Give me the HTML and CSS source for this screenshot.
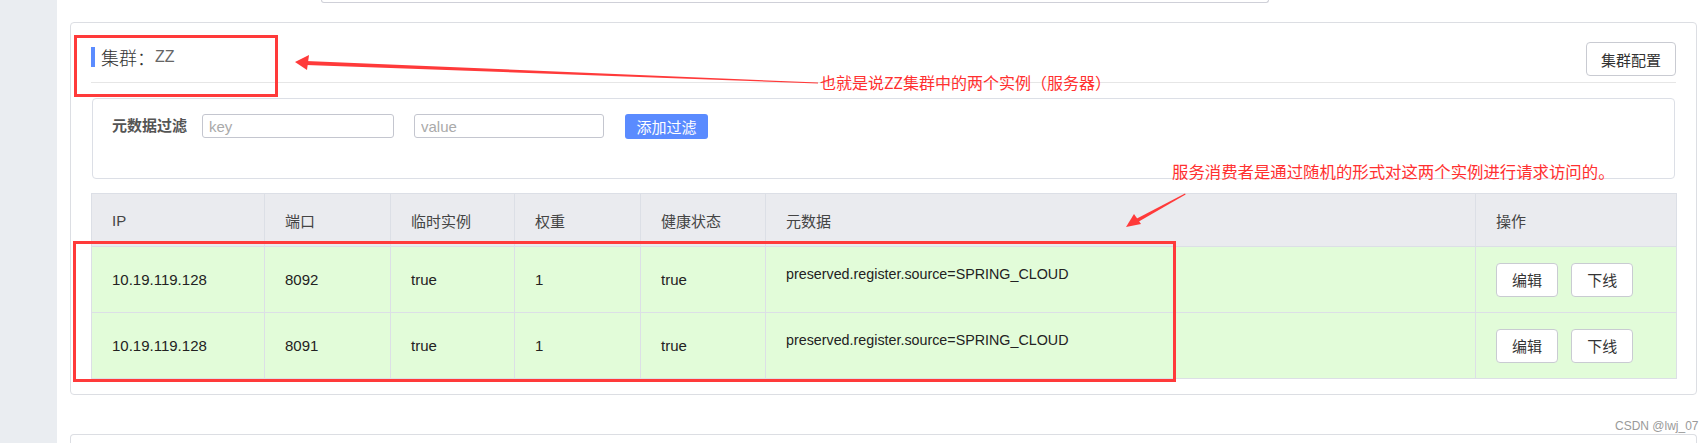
FILE: index.html
```html
<!DOCTYPE html>
<html lang="zh-CN">
<head>
    <meta charset="UTF-8">
    <meta name="viewport" content="width=device-width, initial-scale=1.0">
    <title>集群 ZZ - 实例列表</title>
    <link rel="stylesheet" href="styles.css">
</head>
<body>
    <div class="sidebar"></div>

    <div class="main">
        <!-- bottom of the service info box above -->
        <div class="top-stub"></div>

        <div class="panel">
            <div class="panel-header">
                <div class="cluster-title">
                    <span class="bar"></span>
                    <span class="label">集群：</span>
                    <span class="name">ZZ</span>
                </div>
                <button type="button" class="btn">集群配置</button>
            </div>

            <div class="filter-box">
                <span class="filter-label">元数据过滤</span>
                <input type="text" class="filter-input key" placeholder="key">
                <input type="text" class="filter-input value" placeholder="value">
                <button type="button" class="btn-primary">添加过滤</button>
            </div>

            <table class="instances">
                <colgroup>
                    <col style="width: 173px">
                    <col style="width: 126px">
                    <col style="width: 124px">
                    <col style="width: 126px">
                    <col style="width: 125px">
                    <col style="width: 710px">
                    <col style="width: 201px">
                </colgroup>
                <thead>
                    <tr>
                        <th>IP</th>
                        <th>端口</th>
                        <th>临时实例</th>
                        <th>权重</th>
                        <th>健康状态</th>
                        <th>元数据</th>
                        <th>操作</th>
                    </tr>
                </thead>
                <tbody>
                    <tr>
                        <td>10.19.119.128</td>
                        <td>8092</td>
                        <td>true</td>
                        <td>1</td>
                        <td>true</td>
                        <td class="meta">preserved.register.source=SPRING_CLOUD</td>
                        <td class="actions">
                            <button type="button" class="btn small">编辑</button>
                            <button type="button" class="btn small">下线</button>
                        </td>
                    </tr>
                    <tr>
                        <td>10.19.119.128</td>
                        <td>8091</td>
                        <td>true</td>
                        <td>1</td>
                        <td>true</td>
                        <td class="meta">preserved.register.source=SPRING_CLOUD</td>
                        <td class="actions">
                            <button type="button" class="btn small">编辑</button>
                            <button type="button" class="btn small">下线</button>
                        </td>
                    </tr>
                </tbody>
            </table>
        </div>

        <div class="panel next"></div>
    </div>

    <!-- red annotations drawn on top of the screenshot -->
    <div class="mark mark-title"></div>
    <div class="mark mark-rows"></div>
    <svg class="arrows" width="1708" height="443" viewBox="0 0 1708 443">
        <polygon points="818,82.5 818,83.5 306,65 306,61" fill="#ff3a3a"/>
        <polygon points="295,62 309,55 307,70" fill="#ff3a3a"/>
        <polygon points="1185,193.5 1185.6,194.5 1138,222 1136,219" fill="#ff3a3a"/>
        <polygon points="1126,227 1134,214 1141,224" fill="#ff3a3a"/>
    </svg>
    <div class="note note-1">也就是说ZZ集群中的两个实例（服务器）</div>
    <div class="note note-2">服务消费者是通过随机的形式对这两个实例进行请求访问的。</div>

    <div class="watermark">CSDN @lwj_07</div>
</body>
</html>
```

FILE: styles.css
```css
* {
    margin: 0;
    padding: 0;
    box-sizing: border-box;
    font-family: 'Liberation Sans', 'Noto Sans CJK SC', sans-serif;
}

body {
    position: relative;
    width: 1708px;
    height: 443px;
    overflow: hidden;
    background-color: #fff;
    display: flex;
    color: #333;
}

.sidebar {
    width: 57px;
    flex-shrink: 0;
    background-color: #eaedf1;
}

.main {
    flex: 1;
    height: 443px;
}

.top-stub {
    margin-left: 264px;
    width: 948px;
    height: 3px;
    border: 1px solid #cfd0d8;
    border-top: none;
    border-radius: 0 0 4px 4px;
}

.panel {
    margin: 19px 0 0 13px;
    width: 1627px;
    border: 1px solid #dcdee3;
    border-radius: 4px;
    padding: 0 20px 15px;
}

.panel.next {
    margin-top: 39px;
    height: 9px;
    padding: 0;
    border-bottom: none;
    border-radius: 4px 4px 0 0;
}

.panel-header {
    display: flex;
    justify-content: space-between;
    align-items: center;
    padding: 19px 0 6px;
    border-bottom: 1px solid #e6e6e6;
}

.cluster-title {
    display: flex;
    align-items: center;
    margin-top: -5px;
}

.cluster-title .bar {
    width: 4px;
    height: 20px;
    background-color: #5b8cff;
    margin-right: 6px;
}

.cluster-title .label {
    font-size: 18px;
    font-weight: 300;
    color: #333;
}

.cluster-title .name {
    font-size: 16px;
    color: #666;
}

.btn {
    height: 34px;
    width: 90px;
    background-color: #fff;
    border: 1px solid #c9cbd2;
    border-radius: 4px;
    font-size: 15px;
    color: #333;
    cursor: pointer;
}

.btn.small {
    width: 62px;
}

.filter-box {
    margin: 15px 1px 0;
    height: 81px;
    border: 1px solid #dcdfe6;
    border-radius: 4px;
    padding: 15px 19px;
    display: flex;
    align-items: flex-start;
}

.filter-label {
    font-size: 15px;
    font-weight: bold;
    color: #555;
    line-height: 24px;
    margin-right: 15px;
}

.filter-input {
    height: 24px;
    border: 1px solid #c4c6cf;
    border-radius: 3px;
    padding: 0 6px;
    font-size: 15px;
    color: #333;
    outline: none;
}

.filter-input::placeholder {
    color: #aaa;
}

.filter-input.key {
    width: 192px;
    margin-right: 20px;
}

.filter-input.value {
    width: 190px;
    margin-right: 21px;
}

.btn-primary {
    width: 83px;
    height: 25px;
    background-color: #5a8bff;
    color: #fff;
    border: none;
    border-radius: 3px;
    font-size: 15px;
    cursor: pointer;
}

.instances {
    margin-top: 14px;
    width: 1585px;
    border-collapse: collapse;
    table-layout: fixed;
    font-size: 15px;
}

.instances th,
.instances td {
    border: 1px solid #dcdfe6;
    padding: 0 20px;
    text-align: left;
    font-weight: normal;
}

.instances th {
    height: 53px;
    background-color: #eaebef;
    color: #444;
}

.instances td {
    height: 66px;
    background-color: #e2fcd9;
    color: #222;
}

.instances td.meta {
    font-size: 14.3px;
    padding-bottom: 12px;
}

.instances td.actions .btn + .btn {
    margin-left: 9px;
}

/* annotations */
.mark {
    position: absolute;
    border: 3px solid #ff3a3a;
}

.mark-title {
    left: 74px;
    top: 35px;
    width: 204px;
    height: 62px;
}

.mark-rows {
    left: 73px;
    top: 241px;
    width: 1103px;
    height: 141px;
}

.arrows {
    position: absolute;
    left: 0;
    top: 0;
}

.note {
    position: absolute;
    font-family: 'Noto Sans CJK SC', sans-serif;
    font-size: 16px;
    line-height: 20px;
    color: #ff3030;
    white-space: nowrap;
}

.note-1 {
    left: 820px;
    top: 72px;
}

.note-2 {
    left: 1172px;
    top: 161px;
    font-size: 16.4px;
}

.watermark {
    position: absolute;
    left: 1615px;
    top: 419px;
    font-size: 12px;
    color: #9a9a9a;
}
```
